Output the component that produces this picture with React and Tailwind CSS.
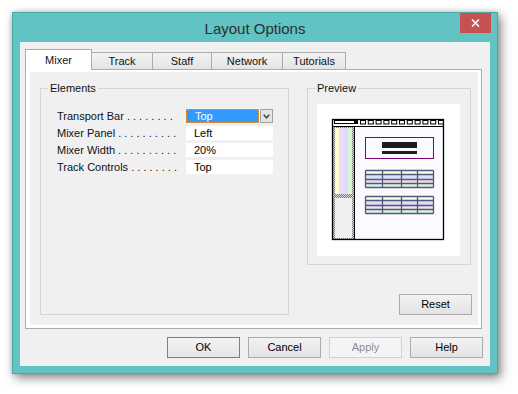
import React from "react";

function PreviewArt() {
  const sq = [];
  for (let i = 0; i < 11; i++) {
    sq.push(
      <rect key={i} x={43.5 + i * 7.8} y={16.5} width={5} height={3.5} fill="#fff" stroke="#000" strokeWidth="1" />
    );
  }
  const table = (y0, k) => {
    const ys = [y0, y0 + 4, y0 + 9, y0 + 13, y0 + 17];
    const fills = ["#ffffd4", "#dcdff8", "#f5dcf2", "#daf7da"];
    return (
      <g key={k}>
        {fills.map((f, i) => (
          <rect key={i} x="48.5" y={ys[i] + 0.5} width="68" height={ys[i + 1] - ys[i]} fill={f} />
        ))}
        {ys.map((y, i) => (
          <line key={"h" + i} x1="48.5" x2="116.5" y1={y + 0.5} y2={y + 0.5} stroke="#4d5a7c" strokeWidth="1.3" />
        ))}
        {[48.5, 65.5, 84.5, 100.5, 116.5].map((x, i) => (
          <line key={"v" + i} x1={x} x2={x} y1={y0 + 0.5} y2={y0 + 17.5} stroke="#4d5a7c" strokeWidth="1.3" />
        ))}
      </g>
    );
  };
  return (
    <svg width="143" height="152" viewBox="0 0 143 152">
      <defs>
        <pattern id="stip" width="2" height="2" patternUnits="userSpaceOnUse">
          <rect width="2" height="2" fill="#d8d8d8" />
          <rect width="1" height="1" fill="#7a7a7a" />
          <rect x="1" y="1" width="1" height="1" fill="#7a7a7a" />
        </pattern>
      </defs>
      <rect x="15" y="15" width="112" height="121" fill="#fbfbff" />
      <rect x="16" y="23" width="21" height="112" fill="url(#stip)" />
      <rect x="18" y="24" width="4" height="66" fill="#ffffd0" />
      <rect x="22" y="24" width="4" height="66" fill="#f1d8fa" />
      <rect x="26" y="24" width="5" height="66" fill="#dcdcff" />
      <rect x="31" y="24" width="4" height="66" fill="#d6f6d6" />
      <rect x="18" y="94" width="17" height="40" fill="#efefef" />
      <line x1="37.5" x2="37.5" y1="22" y2="136" stroke="#000" strokeWidth="1" />
      <line x1="15" x2="127" y1="22.5" y2="22.5" stroke="#000" strokeWidth="1" />
      <rect x="17.5" y="16.5" width="21" height="3" fill="#fff" stroke="#000" strokeWidth="1" />
      <rect x="37" y="16" width="4" height="4" fill="#000" />
      {sq}
      <rect x="48.5" y="33.5" width="68" height="21" fill="none" stroke="#800080" strokeWidth="1" />
      <rect x="65" y="38" width="35" height="6" fill="#1c1c1c" />
      <rect x="65" y="47" width="35" height="3" fill="#1c1c1c" />
      {table(66, "t1")}
      {table(92, "t2")}
      <rect x="15.5" y="15.5" width="111" height="120" fill="none" stroke="#000" strokeWidth="1.3" />
    </svg>
  );
}

function Btn({ children, variant }) {
  let cls =
    "w-[73px] h-[21px] flex items-center justify-center border bg-gradient-to-b from-[#f2f2f2] to-[#e3e3e3] border-[#acacac] text-black";
  if (variant === "default")
    cls =
      "w-[73px] h-[21px] flex items-center justify-center border bg-gradient-to-b from-[#f2f2f2] to-[#e6e6e6] border-[#3c8fe0] text-black";
  if (variant === "disabled")
    cls = "w-[73px] h-[21px] flex items-center justify-center border bg-[#f4f4f4] border-[#d2d2d2] text-[#8d8d8d]";
  return <div className={cls}>{children}</div>;
}

function Row({ label, dots, children }) {
  return (
    <div className="h-[14px] flex items-center">
      <div className="w-[129px] whitespace-nowrap overflow-hidden text-[#111]">
        {label}
        {" " + Array(dots).fill(".").join(" ")}
      </div>
      {children}
    </div>
  );
}

export default function App() {
  const tabBase =
    "h-[17px] flex items-center justify-center pt-[1px] border-t border-r border-[#acacac] bg-gradient-to-b from-[#f3f3f3] to-[#e4e4e4] text-[#111]";
  return (
    <div className="w-[518px] h-[394px] bg-white pl-[12px] pt-[12px] font-['Liberation_Sans',Arial,sans-serif] text-[11px] leading-[13px]">
      <div className="w-[486px] h-[362px] bg-[#61c3c3] border border-[#4ea8a8] flex flex-col shadow-[0_0_5px_rgba(0,0,0,0.18),3px_4px_10px_rgba(0,0,0,0.45)]">
        {/* title bar */}
        <div className="h-[29px] grid grid-cols-[1fr_auto_1fr]">
          <div />
          <div className="flex items-center text-[15px] text-[#2e2e2e] pt-[1px]">Layout Options</div>
          <div className="flex justify-end items-start pr-[6px]">
            <div className="w-[31px] h-[20px] bg-[#c75050] flex items-center justify-center">
              <svg width="9" height="8" viewBox="0 0 9 8">
                <path d="M1 0.5 L8 7.5 M8 0.5 L1 7.5" stroke="#fff" strokeWidth="1.6" />
              </svg>
            </div>
          </div>
        </div>
        {/* client */}
        <div className="mx-[7px] mb-[7px] flex-1 bg-[#f0f0f0] flex flex-col pt-[7px] pl-[5px] pr-[8px]">
          {/* tabs */}
          <div className="h-[20px] flex items-end">
            <div className="w-[67px] h-[21px] -mb-px relative z-10 bg-white border border-b-0 border-[#acacac] flex items-center justify-center text-[#111]">
              Mixer
            </div>
            <div className={tabBase + " w-[61px]"}>Track</div>
            <div className={tabBase + " w-[59px]"}>Staff</div>
            <div className={tabBase + " w-[71px]"}>Network</div>
            <div className={tabBase + " w-[63px]"}>Tutorials</div>
          </div>
          {/* panel */}
          <div className="h-[260px] border border-[#acacac] bg-white pl-[4px] pr-[3px] pt-[2px] pb-[3px] flex">
            <div className="flex-1 bg-[#f0f0f0] flex pl-[10px] pt-[9px] pr-[7px] pb-[10px] gap-[18px]">
              <fieldset className="w-[249px] border border-[#d5d5d5] pl-[16px]">
                <legend className="ml-[-9px] px-[2px] leading-[14px] text-[#111]">Elements</legend>
                <div className="pt-[14px] flex flex-col gap-[3px]">
                  <Row label="Transport Bar" dots={8}>
                    <div className="w-[87px] h-[14px] bg-white flex">
                      <div className="w-[73px] h-full bg-[#3399ff] border border-dotted border-[#f0a040] text-white pl-[8px] leading-[12px]">
                        Top
                      </div>
                      <div className="ml-px w-[13px] h-full border border-[#a0a0a0] bg-[#e4e4e4] flex items-center justify-center">
                        <svg width="7" height="5" viewBox="0 0 7 5">
                          <path d="M0.7 0.8 L3.5 3.8 L6.3 0.8" fill="none" stroke="#454545" strokeWidth="1.5" />
                        </svg>
                      </div>
                    </div>
                  </Row>
                  <Row label="Mixer Panel" dots={10}>
                    <div className="w-[87px] h-[14px] bg-white pl-[8px] leading-[14px]">Left</div>
                  </Row>
                  <Row label="Mixer Width" dots={10}>
                    <div className="w-[87px] h-[14px] bg-white pl-[8px] leading-[14px]">20%</div>
                  </Row>
                  <Row label="Track Controls" dots={8}>
                    <div className="w-[87px] h-[14px] bg-white pl-[8px] leading-[14px]">Top</div>
                  </Row>
                </div>
              </fieldset>
              <div className="w-[164px] flex flex-col">
                <fieldset className="h-[184px] border border-[#d5d5d5] pl-[9px]">
                  <legend className="ml-[-2px] px-[2px] leading-[14px] text-[#111]">Preview</legend>
                  <div className="mt-[9px] w-[143px] h-[152px] bg-white">
                    <PreviewArt />
                  </div>
                </fieldset>
                <div className="mt-auto self-end -mr-px">
                  <Btn>Reset</Btn>
                </div>
              </div>
            </div>
          </div>
          {/* bottom buttons */}
          <div className="mt-[8px] flex justify-end gap-[8px] -mr-px">
            <Btn variant="default">OK</Btn>
            <Btn>Cancel</Btn>
            <Btn variant="disabled">Apply</Btn>
            <Btn>Help</Btn>
          </div>
        </div>
      </div>
    </div>
  );
}
